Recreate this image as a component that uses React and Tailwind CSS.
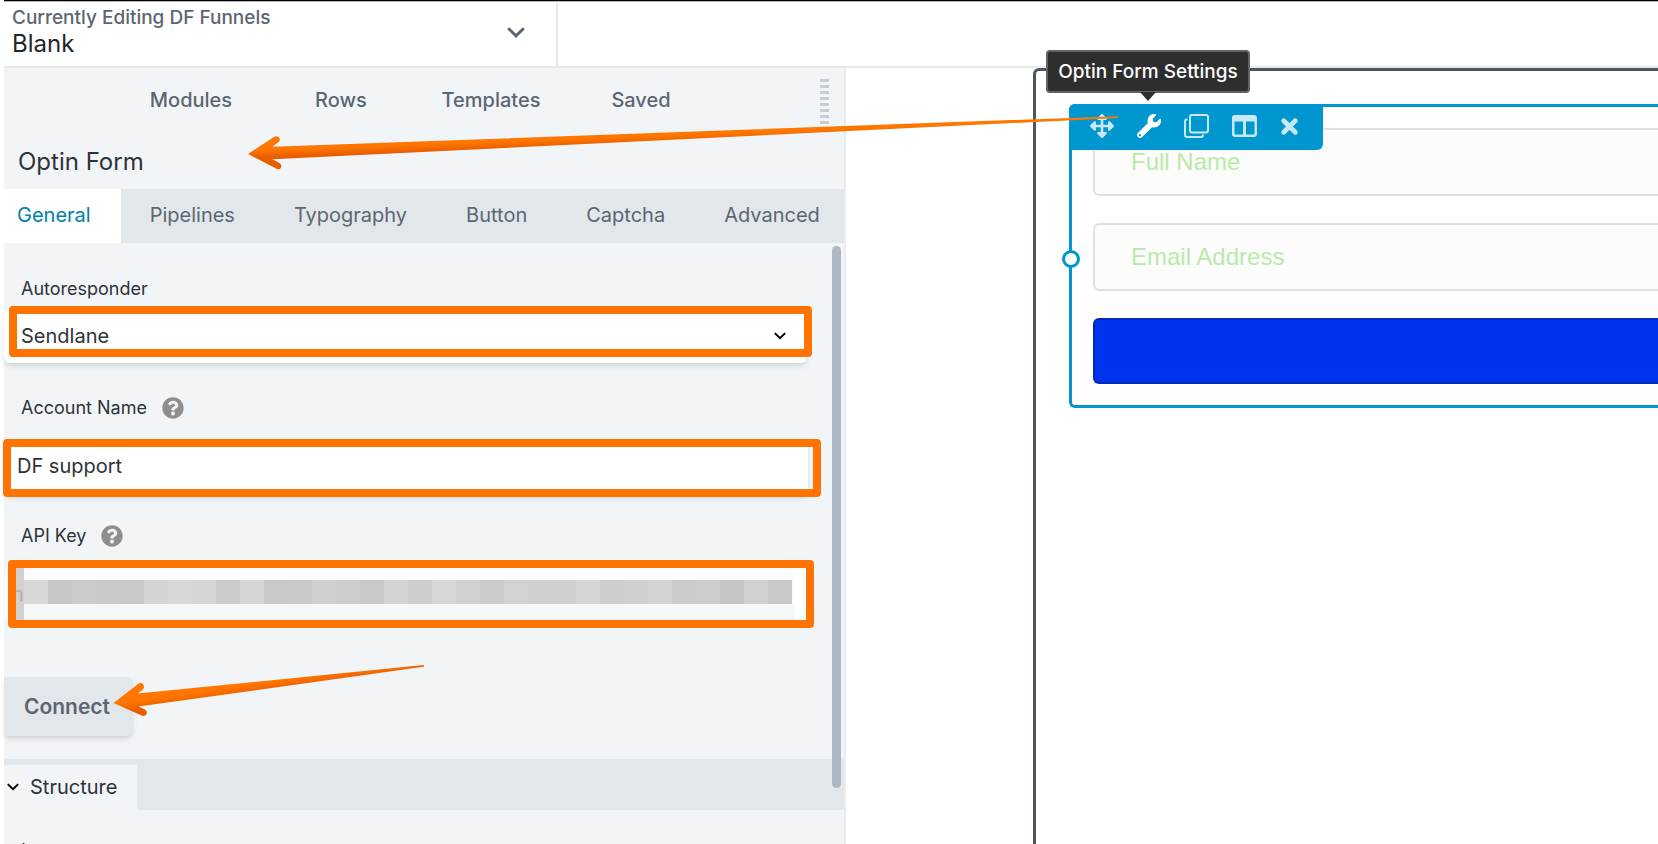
import { useState } from 'react';
import { FaArrowsAlt, FaWrench, FaQuestionCircle } from 'react-icons/fa';

const navItems = ['Modules', 'Rows', 'Templates', 'Saved'];
const tabs = ['General', 'Pipelines', 'Typography', 'Button', 'Captcha', 'Advanced'];

const keyBlocks = [
  '#d8d8d8', '#c7c7c7', '#cbcbcb', '#cacaca', '#c9c9c9', '#d4d4d4', '#d8d8d8', '#d5d5d5',
  '#cccccc', '#d6d6d6', '#c8c8c8', '#cacaca', '#d0d0d0', '#cdcdcd', '#c8c8c8', '#d3d3d3',
  '#cecece', '#d7d7d7', '#d1d1d1', '#cccccc', '#d2d2d2', '#d0d0d0', '#d0d0d0', '#d6d6d6',
  '#cecece', '#d0d0d0', '#d3d3d3', '#cbcbcb', '#cdcdcd', '#c5c5c5', '#d1d1d1', '#c9c9c9',
];

function Chevron({ className, strokeWidth }) {
  return (
    <svg viewBox="0 0 18 11" className={className} fill="none" stroke="currentColor" strokeWidth={strokeWidth} aria-hidden="true">
      <path d="M1.2 1.2 9 8.8l7.8-7.6" />
    </svg>
  );
}

function Highlight({ className }) {
  return <span className={`pointer-events-none absolute rounded border-8 border-[#ff7300] ${className}`} />;
}

function Header() {
  return (
    <header className="flex h-[68px] border-t border-b-2 border-t-black border-b-[#e6e9ee] bg-white">
      <button className="flex w-[554px] items-center justify-between border-t border-r-2 border-t-[#b5b5b5] border-r-[#e6e9ee] pr-[31px] pb-1 pl-2 text-left">
        <span>
          <span className="block text-[19px] leading-6 font-medium text-[#5c6672]">Currently Editing DF Funnels</span>
          <span className="block text-2xl leading-7 text-[#1f252b]">Blank</span>
        </span>
        <Chevron className="h-[11px] w-[18px] text-[#5c6672]" strokeWidth="3" />
      </button>
      <div className="flex-1 border-t border-[#b5b5b5]" />
    </header>
  );
}

function FieldLabel({ htmlFor, help, children }) {
  return (
    <div className="flex h-6 items-center gap-[15px] pl-[17px]">
      <label htmlFor={htmlFor} className="text-lg leading-6 text-[#2f3237]">{children}</label>
      {help && <FaQuestionCircle className="size-[22px] text-[#8e8e8e]" />}
    </div>
  );
}

function SettingsPanel() {
  const [active, setActive] = useState('General');
  const [account, setAccount] = useState('DF support');

  return (
    <aside className="relative w-[842px] shrink-0 border-r-2 border-[#e8ebef] bg-[#f1f5f8]">
      <nav className="relative flex h-16 items-center pl-28">
        {navItems.map((item) => (
          <button key={item} className="w-[150px] text-center text-xl leading-6 font-medium text-[#5c6672]">
            {item}
          </button>
        ))}
        <span className="absolute top-[11px] right-[15px] flex flex-col gap-[3px]">
          {navItems.concat(navItems).map((item, i) => (
            <span key={i} className="h-[3px] w-[9px] bg-[#c5cdd4]" />
          ))}
        </span>
      </nav>

      <h2 className="h-[57px] pt-[14px] pl-[14px] text-2xl leading-8 text-[#2f3237]">Optin Form</h2>

      <div className="flex h-[54px] bg-[#e2e7eb]">
        {tabs.map((tab) => (
          <button
            key={tab}
            onClick={() => setActive(tab)}
            className={`pr-[30px] pb-[2px] text-xl first:pl-[13px] ${tab === active ? 'bg-white text-[#007fa9]' : 'pl-[29px] text-[#5c6672]'}`}
          >
            {tab}
          </button>
        ))}
      </div>

      <form className="pt-[34px]" onSubmit={(event) => event.preventDefault()}>
        <FieldLabel htmlFor="autoresponder">Autoresponder</FieldLabel>
        <div className="relative mt-2 w-[803px]">
          <select
            id="autoresponder"
            className="block h-[54px] w-full appearance-none rounded-md bg-white pl-[17px] text-xl text-[#2f3237] shadow-md"
          >
            <option>Sendlane</option>
          </select>
          <Chevron className="pointer-events-none absolute top-[23px] right-[21px] h-2 w-3 text-black" strokeWidth="3" />
          <Highlight className="-top-[3px] -right-[5px] bottom-[6px] left-[5px]" />
        </div>

        <div className="mt-[33px]">
          <FieldLabel htmlFor="account" help>Account Name</FieldLabel>
        </div>
        <div className="relative mt-[21px] w-[804px]">
          <input
            id="account"
            value={account}
            onChange={(event) => setAccount(event.target.value)}
            className="block h-[54px] w-full bg-white pb-1 pl-[13px] text-xl text-[#2f3237] shadow-md"
          />
          <Highlight className="-top-[2px] -right-[13px] -bottom-[2px] -left-px" />
        </div>

        <div className="mt-[29px]">
          <FieldLabel htmlFor="apikey" help>API Key</FieldLabel>
        </div>
        <div className="relative mt-[18px] ml-px w-[803px] rounded-md bg-white">
          <div className="absolute inset-y-0 left-[11px] w-2 bg-[#d1d1d1]" />
          <input
            id="apikey"
            defaultValue="n"
            className="relative block h-[56px] w-full pl-[7px] text-xl text-[#b0b0b0]"
          />
          <div className="pointer-events-none absolute inset-y-0 right-[14px] left-[19px] bg-[#fbfcfe]">
            <div className="mt-[14px] flex h-6 bg-[#fcfefd]">
              {keyBlocks.map((color, i) => (
                <span key={i} className="w-6" style={{ backgroundColor: color }} />
              ))}
            </div>
            <div className="h-[18px] bg-[#f6f7f7]" />
          </div>
          <Highlight className="-top-[6px] -right-[6px] -bottom-[6px] left-[3px]" />
        </div>

        <button className="mt-[55px] h-[59px] rounded-r-md bg-[#e2e7eb] pr-[23px] pl-5 text-[21px] font-semibold text-[#5c6672] shadow-md">
          Connect
        </button>
      </form>

      <section className="mt-[23px]">
        <div className="h-[51px] bg-[#e2e7eb] pt-[6px]">
          <button className="flex h-[45px] items-center gap-[11px] bg-[#f1f5f8] pr-5 pb-[2px] pl-[3px] text-xl text-[#2f3237]">
            <Chevron className="h-2 w-3 text-black" strokeWidth="3" />
            Structure
          </button>
        </div>
        <p className="mt-[29px] pl-[17px] text-lg leading-6 text-[#2f3237]">Layout</p>
      </section>

      <div className="absolute top-[178px] right-[3px] h-[542px] w-[9px] rounded-full bg-[#b0b7c4]" />
    </aside>
  );
}

function ModuleToolbar() {
  return (
    <div className="absolute -top-[3px] -left-[3px] flex h-[46px] items-center gap-[23px] rounded-tl-md rounded-br-md bg-[#0096cf] pr-6 pb-[2px] pl-[21px] text-[#c8e8f6]">
      <button aria-label="Move">
        <FaArrowsAlt className="size-6" />
      </button>
      <button aria-label="Optin Form Settings" className="relative text-white">
        <FaWrench className="size-6" />
        <span className="absolute bottom-[45px] left-1/2 -ml-[103px] flex h-[43px] w-[204px] items-center justify-center rounded border-2 border-[#636363] bg-[#2e2e2e] text-[19px] font-medium whitespace-nowrap text-white">
          Optin Form Settings
        </span>
        <svg viewBox="0 0 16 9" className="absolute bottom-[37px] left-1/2 -ml-[9px] h-[9px] w-4" fill="#2e2e2e">
          <path d="M0 0h16L8 9z" />
        </svg>
      </button>
      <button aria-label="Duplicate">
        <svg viewBox="0 0 25 24" className="h-6 w-[25px]" fill="none" stroke="currentColor" strokeWidth="2">
          <rect x="6" y="1" width="18" height="17.5" rx="2" />
          <path d="M3.5 5.500H3a2 2 0 0 0-2 2V21a2 2 0 0 0 2 2h14a2 2 0 0 0 2-2v-.5" />
        </svg>
      </button>
      <button aria-label="Columns">
        <svg viewBox="0 0 25 22" className="h-[22px] w-[25px]" fill="currentColor" fillRule="evenodd">
          <path d="M3 0h19a3 3 0 0 1 3 3v16a3 3 0 0 1-3 3H3a3 3 0 0 1-3-3V3a3 3 0 0 1 3-3zM2.500 6.500v12a1 1 0 0 0 1 1H11v-13zM14 6.500v13h7.500a1 1 0 0 0 1-1v-12z" />
        </svg>
      </button>
      <button aria-label="Remove">
        <svg viewBox="-1 -1 19 19" className="size-[19px]" stroke="currentColor" strokeWidth="4.800" strokeLinecap="round">
          <path d="m2.700 2.700 11.600 11.600M14.300 2.700 2.700 14.300" />
        </svg>
      </button>
    </div>
  );
}

function Canvas() {
  return (
    <main className="flex flex-1 pl-[187px]">
      <div className="flex-1 rounded-tl-md border-t-3 border-l-3 border-[#4d5660] pt-[33px] pl-[33px]">
        <div className="relative rounded-l-md border-y-3 border-l-3 border-[#0096cf] py-[21px] pl-[21px] font-['Liberation_Sans',sans-serif] text-2xl">
          <input
            aria-label="Full Name"
            placeholder="Full Name"
            className="mb-[27px] block h-[68px] w-full rounded-l-md border-y-2 border-l-2 border-[#e0e0e0] bg-[#fcfcfc] pl-9 placeholder:text-[#b9eaa8]"
          />
          <input
            aria-label="Email Address"
            placeholder="Email Address"
            className="mb-[27px] block h-[68px] w-full rounded-l-md border-y-2 border-l-2 border-[#e0e0e0] bg-[#fcfcfc] pl-9 placeholder:text-[#b9eaa8]"
          />
          <button aria-label="Submit" className="block h-[66px] w-full rounded-l-md border-y-2 border-l-2 border-[#0229b4] bg-[#0033ee]" />
          <span className="absolute top-1/2 -left-[10px] -mt-[6px] size-[18px] rounded-full border-3 border-[#0096cf] bg-white" />
          <div className="font-['Inter',sans-serif]">
            <ModuleToolbar />
          </div>
        </div>
      </div>
    </main>
  );
}

// callout arrows drawn over the editor
function Arrows() {
  return (
    <svg className="pointer-events-none absolute top-0 left-0 h-[844px] w-[1200px]" viewBox="0 0 1200 844" aria-hidden="true">
      <defs>
        <linearGradient id="long" gradientUnits="userSpaceOnUse" x1="500" y1="138" x2="500.4" y2="149">
          <stop offset="0.3" stopColor="#ff7700" />
          <stop offset="1" stopColor="#e85d00" />
        </linearGradient>
        <linearGradient id="short" gradientUnits="userSpaceOnUse" x1="200" y1="687" x2="202" y2="701">
          <stop offset="0.3" stopColor="#ff7700" />
          <stop offset="1" stopColor="#e85d00" />
        </linearGradient>
      </defs>
      <path
        fill="url(#long)"
        d="M248 154 274 137c4-2.600 8 2 4.500 5L272.500 146.800 1118 116.200v1.800L272.500 159.200 279.500 163c4 3 1 8-3.500 5.500Z"
      />
      <path
        fill="url(#short)"
        d="M113.500 703 138 684c4-3 8 2 5 5.500L137.800 693.500 423.500 665c1 0 1 1.600 0 1.800L138.500 706.500 145 709.500c4 3 1 8-3.500 6Z"
      />
    </svg>
  );
}

export default function App() {
  return (
    <div className="relative h-screen overflow-hidden bg-white pl-1 font-['Inter',sans-serif]">
      <div className="flex h-full flex-col">
        <Header />
        <div className="flex min-h-0 flex-1">
          <SettingsPanel />
          <Canvas />
        </div>
      </div>
      <Arrows />
    </div>
  );
}
